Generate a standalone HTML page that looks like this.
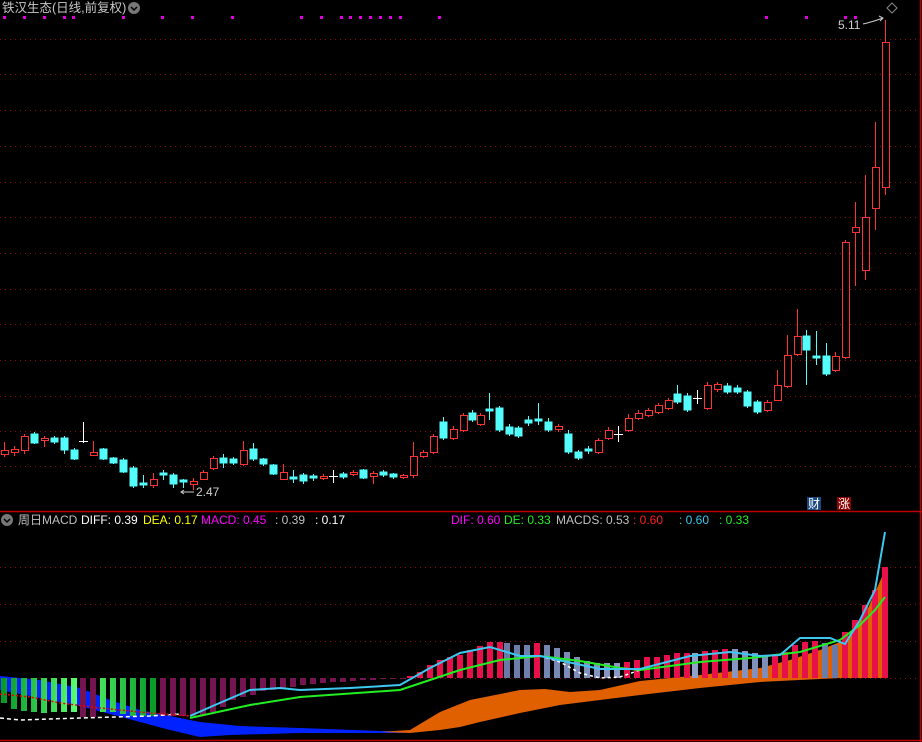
<!DOCTYPE html>
<html><head><meta charset="utf-8"><style>
html,body{margin:0;padding:0;background:#000;}
body{width:922px;height:742px;overflow:hidden;position:relative;font-family:"Liberation Sans","Noto Sans CJK SC",sans-serif;}
.t{position:absolute;font-size:12px;white-space:pre;line-height:14px;}
</style></head><body>
<svg width="922" height="742" style="position:absolute;left:0;top:0" xmlns="http://www.w3.org/2000/svg">
<defs>
<linearGradient id="gg" x1="0" x2="1"><stop offset="0" stop-color="#0a9a2a"/><stop offset="0.5" stop-color="#5cff70"/><stop offset="1" stop-color="#0a9a2a"/></linearGradient>
<linearGradient id="bg" x1="0" x2="1"><stop offset="0" stop-color="#6a7aa8"/><stop offset="0.5" stop-color="#9aa8d0"/><stop offset="1" stop-color="#6a7aa8"/></linearGradient>
</defs>
<g stroke="#8a1010" stroke-dasharray="1,4" stroke-width="1">
<path d="M0 39.5H920M0 74.5H920M0 110.5H920M0 146.5H920M0 182.5H920M0 217.5H920M0 253.5H920M0 289.5H920M0 324.5H920M0 360.5H920M0 396.5H920M0 431.5H920M0 466.5H920M0 567.5H920M0 604.5H920M0 641.5H920M0 678.5H920"/>
</g>
<path d="M0 511.5H922M0 740.5H922M920.5 0V742" stroke="#c00000" stroke-width="1.5"/>
<g fill="#e000e0">
<rect x="3" y="16" width="3" height="3"/><rect x="23" y="16" width="3" height="3"/><rect x="43" y="16" width="3" height="3"/><rect x="63" y="16" width="3" height="3"/><rect x="72" y="16" width="3" height="3"/><rect x="122" y="16" width="3" height="3"/><rect x="161" y="16" width="3" height="3"/><rect x="191" y="16" width="3" height="3"/><rect x="231" y="16" width="3" height="3"/><rect x="300" y="16" width="3" height="3"/><rect x="320" y="16" width="3" height="3"/><rect x="340" y="16" width="3" height="3"/><rect x="349" y="16" width="3" height="3"/><rect x="359" y="16" width="3" height="3"/><rect x="369" y="16" width="3" height="3"/><rect x="379" y="16" width="3" height="3"/><rect x="389" y="16" width="3" height="3"/><rect x="399" y="16" width="3" height="3"/><rect x="438" y="16" width="3" height="3"/><rect x="765" y="16" width="3" height="3"/><rect x="805" y="16" width="3" height="3"/><rect x="844" y="16" width="3" height="3"/><rect x="854" y="16" width="3" height="3"/>
</g>
<circle cx="134" cy="8" r="6" fill="#777"/><path d="M131 7l3 3 3-3" stroke="#000" fill="none" stroke-width="1.5"/>
<path d="M892 3l5 5-5 5-5-5z" stroke="#888" fill="none"/>
<g stroke-width="1" shape-rendering="crispEdges">
<g stroke="#ff3232" fill="#000">
<path d="M4.5 442V457M14.5 446V456M24.5 434V454M44.5 436V447M93.5 441V455M153.5 473V488M193.5 478V490M203.5 470V480M213.5 456V470M243.5 441V466M283.5 464V480M323.5 474V480M353.5 470V476M373.5 471V484M403.5 474V479M413.5 442V478M423.5 450V458M433.5 434V454M453.5 426V440M463.5 413V432M480.5 413V426M558.5 424V432M598.5 438V454M608.5 427V440M628.5 414V432M638.5 410V420M648.5 408V417M658.5 403V414M668.5 398V410M707.5 382V410M717.5 382V392M767.5 400V412M777.5 370V400M787.5 335V388M797.5 309V356M835.5 352V372M845.5 240V359M855.5 202V286M865.5 175V280M875.5 122V230M885.5 20V195"/>
<rect x="1.5" y="450.5" width="7" height="4"/><rect x="11.5" y="449.5" width="7" height="3"/><rect x="21.5" y="436.5" width="7" height="14"/><rect x="41.5" y="438.5" width="7" height="2"/><rect x="90.5" y="452.5" width="7" height="3"/><rect x="150.5" y="479.5" width="7" height="6"/><rect x="190.5" y="481.5" width="7" height="3"/><rect x="200.5" y="472.5" width="7" height="7"/><rect x="210.5" y="458.5" width="7" height="10"/><rect x="240.5" y="450.5" width="7" height="14"/><rect x="280.5" y="472.5" width="7" height="7"/><rect x="320.5" y="476.5" width="7" height="2"/><rect x="350.5" y="472.5" width="7" height="2"/><rect x="370.5" y="473.5" width="7" height="3"/><rect x="400.5" y="475.5" width="7" height="2"/><rect x="410.5" y="456.5" width="7" height="19"/><rect x="420.5" y="452.5" width="7" height="4"/><rect x="430.5" y="436.5" width="7" height="16"/><rect x="450.5" y="429.5" width="7" height="9"/><rect x="460.5" y="415.5" width="7" height="15"/><rect x="477.5" y="415.5" width="7" height="9"/><rect x="555.5" y="426.5" width="7" height="3"/><rect x="595.5" y="440.5" width="7" height="12"/><rect x="605.5" y="430.5" width="7" height="8"/><rect x="625.5" y="418.5" width="7" height="12"/><rect x="635.5" y="413.5" width="7" height="5"/><rect x="645.5" y="410.5" width="7" height="5"/><rect x="655.5" y="405.5" width="7" height="7"/><rect x="665.5" y="400.5" width="7" height="8"/><rect x="704.5" y="385.5" width="7" height="23"/><rect x="714.5" y="384.5" width="7" height="5"/><rect x="764.5" y="402.5" width="7" height="8"/><rect x="774.5" y="385.5" width="7" height="15"/><rect x="784.5" y="355.5" width="7" height="31"/><rect x="794.5" y="336.5" width="7" height="18"/><rect x="832.5" y="356.5" width="7" height="14"/><rect x="842.5" y="242.5" width="7" height="115"/><rect x="852.5" y="227.5" width="7" height="5"/><rect x="862.5" y="217.5" width="7" height="53"/><rect x="872.5" y="167.5" width="7" height="41"/><rect x="882.5" y="42.5" width="7" height="145"/>
</g>
<g stroke="#54fcfc" fill="#54fcfc">
<path d="M34.5 432V444M54.5 436V444M64.5 436V454M74.5 448V460M103.5 448V460M113.5 457V464M123.5 458V473M133.5 466V488M143.5 475V488M163.5 470V480M173.5 473V488M183.5 479V488M223.5 454V468M233.5 457V465M253.5 443V461M263.5 458V466M273.5 464V475M293.5 470V483M303.5 473V484M313.5 474V481M343.5 472V479M363.5 469V479M383.5 470V477M393.5 473V479M443.5 417V440M472.5 410V422M489.5 393V420M499.5 406V432M509.5 424V436M518.5 426V438M528.5 416V426M538.5 403V425M548.5 418V432M568.5 430V454M578.5 450V460M588.5 446V454M677.5 385V404M687.5 393V412M727.5 383V394M737.5 385V394M747.5 390V408M757.5 400V414M806.5 330V385M816.5 331V365M826.5 343V376"/>
<rect x="31" y="434" width="7" height="9"/><rect x="51" y="438" width="7" height="4"/><rect x="61" y="438" width="7" height="12"/><rect x="71" y="450" width="7" height="9"/><rect x="100" y="449" width="7" height="10"/><rect x="110" y="458" width="7" height="5"/><rect x="120" y="460" width="7" height="12"/><rect x="130" y="468" width="7" height="18"/><rect x="140" y="483" width="7" height="2"/><rect x="160" y="473" width="7" height="2"/><rect x="170" y="475" width="7" height="9"/><rect x="180" y="480" width="7" height="2"/><rect x="220" y="458" width="7" height="5"/><rect x="230" y="459" width="7" height="4"/><rect x="250" y="449" width="7" height="10"/><rect x="260" y="459" width="7" height="5"/><rect x="270" y="465" width="7" height="9"/><rect x="290" y="477" width="7" height="2"/><rect x="300" y="475" width="7" height="6"/><rect x="310" y="476" width="7" height="2"/><rect x="340" y="474" width="7" height="3"/><rect x="360" y="470" width="7" height="8"/><rect x="380" y="472" width="7" height="3"/><rect x="390" y="474" width="7" height="3"/><rect x="440" y="422" width="7" height="16"/><rect x="469" y="413" width="7" height="7"/><rect x="486" y="409" width="7" height="2"/><rect x="496" y="408" width="7" height="22"/><rect x="506" y="427" width="7" height="7"/><rect x="515" y="428" width="7" height="8"/><rect x="525" y="420" width="7" height="3"/><rect x="535" y="419" width="7" height="2"/><rect x="545" y="422" width="7" height="8"/><rect x="565" y="434" width="7" height="18"/><rect x="575" y="452" width="7" height="6"/><rect x="585" y="449" width="7" height="2"/><rect x="674" y="394" width="7" height="8"/><rect x="684" y="396" width="7" height="14"/><rect x="724" y="386" width="7" height="6"/><rect x="734" y="388" width="7" height="4"/><rect x="744" y="392" width="7" height="14"/><rect x="754" y="402" width="7" height="10"/><rect x="803" y="336" width="7" height="14"/><rect x="813" y="356" width="7" height="2"/><rect x="823" y="356" width="7" height="18"/>
</g>
<g stroke="#fff"><path d="M83.5 422V443M79 441.5H88M333.5 470V483M329 476.5H338M618.5 426V442M614 434.5H623M697.5 390V404M693 398.5H702"/></g>
</g>
<text x="838" y="29" fill="#d0d0d0" font-size="12" font-family="Liberation Sans">5.11</text>
<path d="M863 24Q872 22 883 18M879 16l4 2-3 3" stroke="#ccc" fill="none"/>
<text x="196" y="496" fill="#d0d0d0" font-size="12" font-family="Liberation Sans">2.47</text>
<path d="M184 490l-3 2 3 2M181 492H194" stroke="#ccc" fill="none"/>
<rect x="807" y="497" width="14" height="13" fill="#1a4a80"/><text x="808" y="508" fill="#fff" font-size="12" font-family="Noto Sans CJK SC">财</text>
<rect x="837" y="497" width="14" height="13" fill="#8b0000"/><text x="838" y="508" fill="#fff" font-size="12" font-family="Noto Sans CJK SC">涨</text>
<polygon fill="#0022ff" points="0,676 40,680 80,688 110,700 140,710 170,716 200,722 240,726 300,728 380,731 405,731 405,733 300,733 230,735 200,737 170,730 140,722 110,714 80,706 40,698 0,690"/>
<polygon fill="#e06000" points="380,732 410,730 440,712 470,700 520,690 545,689 570,692 600,690 640,681 700,675 760,668 790,660 820,650 845,640 865,615 885,570 885,678 840,678 760,682 700,688 640,695 600,700 560,705 520,713 480,722 460,727 440,730 410,733"/>
<path stroke="#741450" stroke-width="6" d="M83 678V717M93 678V717M163 678V716M173 678V716M183 678V716M193 678V716M203 678V715M213 678V712M223 678V707M233 678V700M243 678V697M253 678V695M263 678V691M273 678V690M283 678V688M293 678V687M303 678V685M313 678V684M323 678V683M333 678V682M343 678V682M353 678V681M363 678V680M373 678V680M383 678V679M393 678V679M403 678V679"/>
<path stroke="url(#gg)" stroke-width="6" d="M4 678V703M14 678V709M24 678V711M34 678V712M44 678V713M54 678V712M64 678V712M74 678V712M103 678V712M113 678V712M123 678V714M133 678V716M143 678V716M153 678V716"/>
<path stroke="#e8104a" stroke-width="6" d="M410 678V676M420 678V672M430 678V665M440 678V660M450 678V657M460 678V655M470 678V650M480 678V646M490 678V642M500 678V642M537 678V643M627 678V662M637 678V660M647 678V657M657 678V657M667 678V655M677 678V653M687 678V653M705 678V651M715 678V650M725 678V649M775 678V655M785 678V652M795 678V645M805 678V642M815 678V641M845 678V632M855 678V620M865 678V605M875 678V590M885 678V567"/>
<path stroke="url(#bg)" stroke-width="6" d="M507 678V643M517 678V645M527 678V645M547 678V645M557 678V648M567 678V652M577 678V657M587 678V661M597 678V663M607 678V663M617 678V663M695 678V653M735 678V649M745 678V651M755 678V653M765 678V656M825 678V643M835 678V645"/>
<path d="M0 718L20 720L80 718L150 716L180 714" stroke="#fff" stroke-dasharray="4,3" fill="none" stroke-width="1.5"/>
<path d="M0 694L30 697L60 703L100 708L150 713L190 716" stroke="#e00" stroke-dasharray="2,2" fill="none" stroke-width="1.5"/>
<path d="M540 656L560 662L580 673L600 678L620 677L640 670" stroke="#fff" stroke-dasharray="3,3" fill="none" stroke-width="1.5"/>
<path d="M190 718L250 705L300 697L400 690L430 680L460 670L500 660L540 656L580 661L620 668L640 670L700 662L750 658L800 652L840 640L860 625L875 610L885 597" stroke="#22ee22" fill="none" stroke-width="2"/>
<path d="M190 716L215 705L250 690L280 688L300 690L350 688L400 685L430 668L460 653L490 647L520 656L540 656L600 669L640 669L690 656L730 652L760 656L780 655L800 638L830 638L845 644L860 620L875 590L885 532" stroke="#3cc8f0" fill="none" stroke-width="2"/>
<circle cx="7" cy="520" r="6" fill="#777"/><path d="M4 519l3 3 3-3" stroke="#000" fill="none" stroke-width="1.5"/>
</svg>
<div class="t" style="left:2px;top:1px;font-size:12.5px;color:#c8c8c8">铁汉生态(日线,前复权)</div>
<div class="t" style="left:18px;top:513px;color:#c0c0c0">周日MACD</div>
<div class="t" style="left:81px;top:513px;color:#fff">DIFF: 0.39</div>
<div class="t" style="left:143px;top:513px;color:#ffff00">DEA: 0.17</div>
<div class="t" style="left:201px;top:513px;color:#ff00ff">MACD: 0.45</div>
<div class="t" style="left:275px;top:513px;color:#c0c0c0">: 0.39</div>
<div class="t" style="left:315px;top:513px;color:#fff">: 0.17</div>
<div class="t" style="left:451px;top:513px;color:#ff00ff">DIF: 0.60</div>
<div class="t" style="left:504px;top:513px;color:#22ee22">DE: 0.33</div>
<div class="t" style="left:556px;top:513px;color:#c0c0c0">MACDS: 0.53</div>
<div class="t" style="left:633px;top:513px;color:#ff2020">: 0.60</div>
<div class="t" style="left:679px;top:513px;color:#3cc8f0">: 0.60</div>
<div class="t" style="left:719px;top:513px;color:#22ee22">: 0.33</div>
</body></html>
